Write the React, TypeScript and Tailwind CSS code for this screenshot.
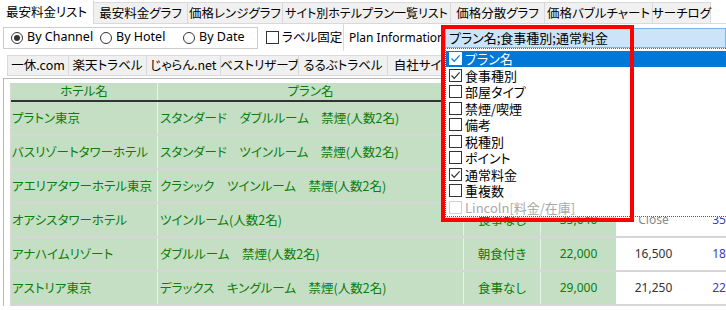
import React from 'react';

type Tab = { label: string; width: string; size?: string; active?: boolean };

const jp = "font-['Noto_Sans_CJK_JP',sans-serif] [font-feature-settings:'palt']";
const latin = "font-['Noto_Sans','Noto_Sans_CJK_JP',sans-serif]";

const topTabs: Tab[] = [
  { label: '最安料金リスト', width: 'w-[94px]', size: 'text-[12.5px]', active: true },
  { label: '最安料金グラフ', width: 'w-[94px]', size: 'text-[12.5px]' },
  { label: '価格レンジグラフ', width: 'w-[95px]', size: 'text-[12.5px]' },
  { label: 'サイト別ホテルプラン一覧リスト', width: 'w-[168px]', size: 'text-[12px]' },
  { label: '価格分散グラフ', width: 'w-[94px]', size: 'text-[12.5px]' },
  { label: '価格バブルチャート', width: 'w-[108px]', size: 'text-[12.5px]' },
  { label: 'サーチログ', width: 'w-[58px]', size: 'text-[12.5px]' },
];

const channelTabs: Tab[] = [
  { label: '一休.com', width: 'w-[62px]' },
  { label: '楽天トラベル', width: 'w-[79px]' },
  { label: 'じゃらん.net', width: 'w-[75px]' },
  { label: 'ベストリザーブ', width: 'w-[79px]' },
  { label: 'るるぶトラベル', width: 'w-[90px]' },
  { label: '自社サイト', width: 'w-[71px]' },
];

const planItems = [
  { label: 'プラン名', checked: true, selected: true },
  { label: '食事種別', checked: true },
  { label: '部屋タイプ' },
  { label: '禁煙/喫煙' },
  { label: '備考' },
  { label: '税種別' },
  { label: 'ポイント' },
  { label: '通常料金', checked: true },
  { label: '重複数' },
  { label: 'Lincoln[料金/在庫]', disabled: true },
];

// rows 1-3 right-hand cells sit under the open drop-down, so they stay blank
const rows = [
  { hotel: 'プラトン東京', plan: 'スタンダード　ダブルルーム　禁煙(人数2名)', meal: '', regular: '', price: '', next: '' },
  { hotel: 'バスリゾートタワーホテル', plan: 'スタンダード　ツインルーム　禁煙(人数2名)', meal: '', regular: '', price: '', next: '' },
  { hotel: 'アエリアタワーホテル東京', plan: 'クラシック　ツインルーム　禁煙(人数2名)', meal: '', regular: '', price: '', next: '' },
  { hotel: 'オアシスタワーホテル', plan: 'ツインルーム(人数2名)', meal: '食事なし', regular: '35,640', price: 'Close', next: '35,640' },
  { hotel: 'アナハイムリゾート', plan: 'ダブルルーム　禁煙(人数2名)', meal: '朝食付き', regular: '22,000', price: '16,500', next: '18,700' },
  { hotel: 'アストリア東京', plan: 'デラックス　キングルーム　禁煙(人数2名)', meal: '食事なし', regular: '29,000', price: '21,250', next: '22,400' },
];

function Radio({ label, checked }: { label: string; checked?: boolean }) {
  return (
    <div className="flex items-center gap-[4px]">
      <span className="w-[12px] h-[12px] rounded-full border border-[#333] bg-white flex items-center justify-center">
        {checked && <span className="w-[6px] h-[6px] rounded-full bg-[#333]" />}
      </span>
      <span className={`${latin} text-[12.5px] text-black`}>{label}</span>
    </div>
  );
}

function CheckBox({ checked, inverse, disabled }: { checked?: boolean; inverse?: boolean; disabled?: boolean }) {
  const border = disabled ? 'border-[#d0d0d0]' : inverse ? 'border-white' : 'border-[#333]';
  return (
    <span className={`w-[13px] h-[13px] border ${border} bg-white flex items-center justify-center shrink-0`}>
      {checked && (
        <svg width="11" height="11" viewBox="0 0 11 11">
          <path d="M1.5 5.5 L4.2 8.3 L9.6 2.4" fill="none" stroke={inverse ? '#0078d7' : '#333'} strokeWidth="1.2" />
        </svg>
      )}
    </span>
  );
}

export default function App() {
  return (
    <div className={`relative w-[726px] h-[310px] overflow-hidden bg-white ${jp}`}>
      {/* main tabs */}
      <div className="flex items-end h-[24px] border-b border-[#d9d9d9]">
        {topTabs.map(tab =>
          tab.active ? (
            <div key={tab.label} className={`${tab.width} ${tab.size} shrink-0 h-[24px] -mb-px bg-white border-r border-[#d9d9d9] flex items-center justify-center text-black whitespace-nowrap`}>
              {tab.label}
            </div>
          ) : (
            <div key={tab.label} className={`${tab.width} ${tab.size} shrink-0 h-[21px] bg-[#f0f0f0] border-t border-r border-[#d9d9d9] flex items-center justify-center text-black whitespace-nowrap`}>
              {tab.label}
            </div>
          )
        )}
      </div>

      {/* toolbar */}
      <div className="flex items-center h-[27px]">
        <div className="shrink-0 ml-[3px] w-[255px] h-[22px] border border-[#cccccc] flex items-center">
          <div className="w-[96px] pl-[7px]">
            <Radio label="By Channel" checked />
          </div>
          <div className="w-[83px]">
            <Radio label="By Hotel" />
          </div>
          <Radio label="By Date" />
        </div>
        <div className="shrink-0 w-[86px] h-full pl-[8px] border-r border-[#d9d9d9] flex items-center gap-[3px]">
          <CheckBox />
          <span className="text-[12.5px] text-black whitespace-nowrap">ラベル固定</span>
        </div>
        <div className={`${latin} shrink-0 w-[101px] pl-[5px] text-[12px] text-black whitespace-nowrap`}>Plan Information</div>
        <div className="relative flex-1 h-[20px]">
          <div className="h-full bg-[#cce4f7] border border-[#7eb4ea] flex items-center pl-[3px] text-[13px] text-black whitespace-nowrap">
            プラン名;食事種別;通常料金
          </div>
          {/* dropped list */}
          <div className="absolute left-0 top-full right-[-20px] z-10 bg-white border-l border-b border-[#5a5a5a] border-t border-t-[#8b5a2b] border-dotted pt-[2px]">
            {planItems.map(item => (
              <div
                key={item.label}
                className={`h-[16.5px] pl-[3px] flex items-center gap-[3px] text-[13px] whitespace-nowrap ${
                  item.selected ? 'bg-[#0078d7] text-white' : item.disabled ? 'text-[#a8a8a8]' : 'text-black'
                }`}
              >
                <CheckBox checked={item.checked} inverse={item.selected} disabled={item.disabled} />
                <span>{item.label}</span>
              </div>
            ))}
          </div>
        </div>
      </div>

      {/* channel tabs */}
      <div className="flex pl-[7px] pt-[4px]">
        {channelTabs.map((tab, i) => (
          <div
            key={tab.label}
            className={`${tab.width} shrink-0 h-[21px] bg-[#f0f0f0] border border-[#d9d9d9] ${i > 0 ? '-ml-px' : ''} flex items-center justify-center text-[12.5px] text-black whitespace-nowrap`}
          >
            {tab.label}
          </div>
        ))}
      </div>

      {/* content panel */}
      <div className="mt-[2px] ml-[3px] border-l border-t border-[#b8b8b8] pl-[6px] pt-[4px]">
        <div className="w-max border-l border-[#d8d8d8]">
          <div className="flex h-[19px] bg-[#c4dfc4] border-b-2 border-[#333] text-[12.5px] text-[#0a7d0a]">
            <div className="w-[147px] shrink-0 border-r border-[#e8f2e8] flex items-center justify-center">ホテル名</div>
            <div className="w-[306px] shrink-0 border-r border-[#e8f2e8] flex items-center justify-center">プラン名</div>
            <div className="w-[77px] shrink-0 border-r border-[#e8f2e8]" />
            <div className="w-[75px] shrink-0" />
            <div className="w-[75px] shrink-0" />
            <div className="w-[80px] shrink-0" />
          </div>
          {rows.map(row => (
            <div key={row.hotel} className="flex h-[34px] border-b-2 border-[#d6d6d6] text-[12.5px]">
              <div className="w-[147px] shrink-0 pl-[1px] bg-[#c4dfc4] border-r border-[#e8f2e8] flex items-center text-[#0a7d0a] whitespace-nowrap overflow-hidden">{row.hotel}</div>
              <div className="w-[306px] shrink-0 pl-[2px] bg-[#c4dfc4] border-r border-[#e8f2e8] flex items-center text-[#0a7d0a] whitespace-nowrap">{row.plan}</div>
              <div className="w-[77px] shrink-0 bg-[#c4dfc4] border-r border-[#e8f2e8] flex items-center justify-center text-[#0a7d0a]">{row.meal}</div>
              <div className={`${latin} w-[75px] shrink-0 bg-[#c4dfc4] flex items-center justify-center text-[12px] text-[#0a7d0a]`}>{row.regular}</div>
              <div className={`${latin} w-[75px] shrink-0 flex items-center justify-center text-[12px] ${row.price === 'Close' ? 'text-[#8a8a8a]' : 'text-[#333]'}`}>{row.price}</div>
              <div className={`${latin} w-[80px] shrink-0 flex items-center justify-center text-[12px] text-[#3c3cc8]`}>{row.next}</div>
            </div>
          ))}
        </div>
      </div>

      {/* red annotation frame */}
      <div className="absolute left-[441px] top-[25px] w-[193px] h-[197px] border-4 border-[#ff0000] z-20" />
    </div>
  );
}
